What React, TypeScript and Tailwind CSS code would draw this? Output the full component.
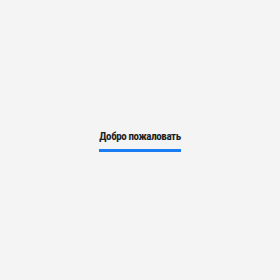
import React from 'react';

const App = () => {
    return (
        <div className="w-[280px] h-[280px] bg-[#f4f4f4] flex items-center justify-center">
            <div className="flex flex-col items-stretch gap-[5px] mt-[1px]">
                <h1 className="whitespace-nowrap text-[11px] leading-[15px] font-bold font-stretch-condensed tracking-[-0.4px] text-[#222] font-['Roboto']">
                    Добро пожаловать
                </h1>
                <div className="h-[3px] bg-[#1a7cf2]" />
            </div>
        </div>
    );
};

export default App;
